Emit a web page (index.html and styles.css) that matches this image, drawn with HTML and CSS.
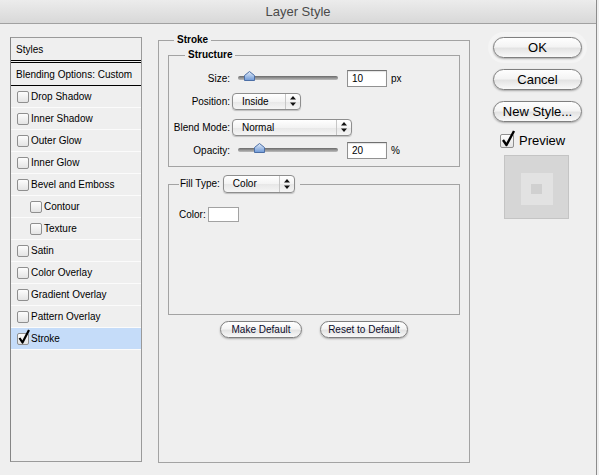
FILE: index.html
```html
<!DOCTYPE html>
<html lang="en">
<head>
    <meta charset="UTF-8">
    <title>Layer Style</title>
    <link rel="stylesheet" href="styles.css">
</head>
<body>

    <div class="window">
        <!-- Title bar -->
        <div class="titlebar">Layer Style</div>

        <div class="dialog">
            <!-- Effects list -->
            <ul class="styles-list">
                <li class="list-head">Styles</li>
                <li class="list-blend">Blending Options: Custom</li>
                <li class="effect"><span class="check"></span>Drop Shadow</li>
                <li class="effect"><span class="check"></span>Inner Shadow</li>
                <li class="effect"><span class="check"></span>Outer Glow</li>
                <li class="effect"><span class="check"></span>Inner Glow</li>
                <li class="effect"><span class="check"></span>Bevel and Emboss</li>
                <li class="effect sub"><span class="check"></span>Contour</li>
                <li class="effect sub"><span class="check"></span>Texture</li>
                <li class="effect"><span class="check"></span>Satin</li>
                <li class="effect"><span class="check"></span>Color Overlay</li>
                <li class="effect"><span class="check"></span>Gradient Overlay</li>
                <li class="effect"><span class="check"></span>Pattern Overlay</li>
                <li class="effect selected">
                    <span class="check">
                        <svg class="tick" viewBox="0 0 14 16" width="14" height="16"><path d="M2.5 9 L5.5 13.5 L12 1" fill="none" stroke="#000" stroke-width="2.2" stroke-linejoin="round"/></svg>
                    </span>Stroke
                </li>
            </ul>

            <!-- Stroke settings -->
            <fieldset class="group stroke-group">
                <legend>Stroke</legend>

                <fieldset class="group structure">
                    <legend>Structure</legend>

                    <div class="field field-size">
                        <label>Size:</label>
                        <div class="slider">
                            <svg class="thumb" style="left: 6px" viewBox="0 0 11 10" width="11" height="10">
                                <defs>
                                    <linearGradient id="thumb-a" x1="0" y1="0" x2="0" y2="1">
                                        <stop offset="0" stop-color="#e3edfa"/>
                                        <stop offset="1" stop-color="#6d98d6"/>
                                    </linearGradient>
                                </defs>
                                <path d="M5.5 0.5 L10.5 4.5 L10.5 9.5 L0.5 9.5 L0.5 4.5 Z" fill="url(#thumb-a)" stroke="#4c6fa6"/>
                            </svg>
                        </div>
                        <input class="num" type="text" value="10">
                        <span class="unit">px</span>
                    </div>

                    <div class="field field-position">
                        <label>Position:</label>
                        <div class="popup popup-position">
                            <span class="popup-label">Inside</span>
                            <span class="arrows"><svg viewBox="0 0 6 10" width="6" height="10"><path d="M3 0 L6 3.5 L0 3.5 Z M0 6.5 L6 6.5 L3 10 Z" fill="#111"/></svg></span>
                        </div>
                    </div>

                    <div class="field field-blend">
                        <label>Blend Mode:</label>
                        <div class="popup popup-blend">
                            <span class="popup-label">Normal</span>
                            <span class="arrows"><svg viewBox="0 0 6 10" width="6" height="10"><path d="M3 0 L6 3.5 L0 3.5 Z M0 6.5 L6 6.5 L3 10 Z" fill="#111"/></svg></span>
                        </div>
                    </div>

                    <div class="field field-opacity">
                        <label>Opacity:</label>
                        <div class="slider">
                            <svg class="thumb" style="left: 16px" viewBox="0 0 11 10" width="11" height="10">
                                <defs>
                                    <linearGradient id="thumb-b" x1="0" y1="0" x2="0" y2="1">
                                        <stop offset="0" stop-color="#e3edfa"/>
                                        <stop offset="1" stop-color="#6d98d6"/>
                                    </linearGradient>
                                </defs>
                                <path d="M5.5 0.5 L10.5 4.5 L10.5 9.5 L0.5 9.5 L0.5 4.5 Z" fill="url(#thumb-b)" stroke="#4c6fa6"/>
                            </svg>
                        </div>
                        <input class="num" type="text" value="20">
                        <span class="unit">%</span>
                    </div>
                </fieldset>

                <fieldset class="group fill">
                    <legend>
                        <label>Fill Type:</label>
                        <div class="popup popup-fill">
                            <span class="popup-label">Color</span>
                            <span class="arrows"><svg viewBox="0 0 6 10" width="6" height="10"><path d="M3 0 L6 3.5 L0 3.5 Z M0 6.5 L6 6.5 L3 10 Z" fill="#111"/></svg></span>
                        </div>
                    </legend>
                    <div class="color-row">
                        <label>Color:</label>
                        <span class="swatch"></span>
                    </div>
                </fieldset>

                <div class="defaults">
                    <button class="small-btn btn-make">Make Default</button>
                    <button class="small-btn btn-reset">Reset to Default</button>
                </div>
            </fieldset>

            <!-- Dialog buttons and preview -->
            <div class="actions">
                <button class="aqua default">OK</button>
                <button class="aqua">Cancel</button>
                <button class="aqua">New Style...</button>
                <div class="preview-toggle">
                    <span class="check big">
                        <svg class="tick" viewBox="0 0 16 18" width="16" height="18"><path d="M3 10 L6.5 15 L14 1" fill="none" stroke="#000" stroke-width="2.4" stroke-linejoin="round"/></svg>
                    </span>
                    <span>Preview</span>
                </div>
                <div class="preview-box">
                    <div class="preview-fill"><div class="preview-core"></div></div>
                </div>
            </div>
        </div>
    </div>

</body>
</html>
```

FILE: styles.css
```css
/* Mac-style dialog */
body {
    margin: 0;
    background-color: #efefef;
    font-family: "Liberation Sans", Arial, sans-serif;
    font-size: 10px;
    color: #000;
}
.window {
    width: 597px;
    height: 475px;
    box-sizing: border-box;
    border-right: 1px solid #8c8c8c;
    background-color: #efefef;
}
.titlebar {
    height: 23px;
    line-height: 24px;
    border-bottom: 1px solid #a1a1a1;
    border-top-right-radius: 5px;
    background: linear-gradient(#ececec, #d8d8d8);
    text-align: center;
    font-size: 13px;
    color: #4a4a4a;
}
.dialog {
    display: flex;
    align-items: flex-start;
    padding: 13px 0 0 10px;
}

/* Effects list */
.styles-list {
    list-style: none;
    margin: 0;
    padding: 0;
    width: 132px;
    height: 425px;
    box-sizing: border-box;
    border: 1px solid #9a9a9a;
    border-left-color: #858585;
}
.styles-list li {
    height: 21px;
    display: flex;
    align-items: center;
    padding-left: 6px;
    border-bottom: 1px solid #fbfbfb;
}
.styles-list .list-head {
    height: 22px;
    padding-left: 5px;
    border-bottom: 3px double #000;
}
.styles-list .list-blend {
    height: 22px;
    padding-left: 5px;
    border-bottom: 1px solid #000;
}
.styles-list .sub {
    padding-left: 19px;
}
.styles-list .selected {
    background-color: #c5dcf9;
}
.check {
    position: relative;
    flex: none;
    width: 12px;
    height: 12px;
    box-sizing: border-box;
    margin-right: 2px;
    border: 1px solid #8f8f8f;
    border-radius: 2px;
    background: linear-gradient(#fdfdfd, #e4e4e4);
}
.check .tick {
    position: absolute;
    left: -1px;
    top: -5px;
}
.check.big {
    width: 14px;
    height: 14px;
    margin-right: 5px;
}
.check.big .tick {
    left: -1px;
    top: -5px;
}

/* Group boxes */
.group {
    margin: 0;
    min-width: 0;
    border: 1px solid #a3a3a3;
}
.group > legend {
    padding: 0 3px;
    line-height: 14px;
    font-weight: bold;
}
.stroke-group {
    margin: -4px 0 0 16px;
    width: 312px;
    height: 430px;
    box-sizing: border-box;
    padding: 1px 9px 0;
}
.stroke-group > legend {
    margin-left: 6px;
}
.structure {
    padding: 0 8px 7px;
}
.structure > legend {
    margin-left: 8px;
}
.field {
    display: flex;
    align-items: center;
    height: 18px;
}
.field-size { margin-top: 7px; }
.field-position { margin-top: 5px; }
.field-blend { margin-top: 8px; }
.field-opacity { margin-top: 5px; }
.field > label {
    flex: none;
    display: flex;
    justify-content: flex-end;
    width: 53px;
    margin-right: 2px;
    white-space: nowrap;
}
.slider {
    position: relative;
    width: 100px;
    height: 4px;
    margin-left: 6px;
    border-radius: 2px;
    background: linear-gradient(#6a6a6a, #bdbdbd);
}
.slider .thumb {
    position: absolute;
    top: -5px;
}
.num {
    width: 40px;
    height: 17px;
    box-sizing: border-box;
    margin: 0 0 0 9px;
    padding: 0 0 0 4px;
    border: 1px solid #919191;
    border-top-color: #707070;
    background-color: #fff;
    box-shadow: inset 0 1px 1px rgba(0, 0, 0, 0.12);
    font: 10px "Liberation Sans", Arial, sans-serif;
}
.unit {
    margin-left: 4px;
}

/* Popup menus */
.popup {
    display: flex;
    align-items: center;
    height: 17px;
    box-sizing: border-box;
    padding-left: 9px;
    border: 1px solid #8e8e8e;
    border-radius: 4px;
    background: linear-gradient(#ffffff, #f3f3f3 50%, #e7e7e7 51%, #f5f5f5);
    box-shadow: 0 1px 1px rgba(0, 0, 0, 0.2);
    font-weight: normal;
}
.popup-label {
    flex: 1;
}
.popup .arrows {
    align-self: stretch;
    width: 14px;
    display: flex;
    align-items: center;
    justify-content: center;
    border-left: 1px solid #c6c6c6;
}
.popup-position { width: 69px; }
.popup-blend { width: 120px; }
.popup-fill {
    width: 72px;
    height: 18px;
    margin-left: 3px;
}

/* Fill box */
.fill {
    height: 140px;
    box-sizing: border-box;
    margin-top: 8px;
    padding: 0 10px;
}
.fill > legend {
    display: flex;
    align-items: center;
    padding: 0 5px 0 1px;
    font-weight: normal;
}
.color-row {
    display: flex;
    align-items: center;
    margin-top: 14px;
}
.color-row label {
    width: 29px;
}
.swatch {
    width: 31px;
    height: 15px;
    box-sizing: border-box;
    border: 1px solid #a2a2a2;
    background-color: #fff;
}

/* Buttons */
.defaults {
    display: flex;
    justify-content: center;
    gap: 18px;
    margin-top: 6px;
}
.small-btn,
.aqua {
    padding: 0;
    border: 1px solid #7f7f7f;
    background: linear-gradient(#fefefe, #f4f4f4 45%, #e3e3e3 55%, #f9f9f9);
    box-shadow: 0 1px 2px rgba(0, 0, 0, 0.3);
    color: #000;
    font-family: "Liberation Sans", Arial, sans-serif;
}
.small-btn {
    height: 17px;
    border-radius: 9px;
    font-size: 10px;
    color: #0b0b2a;
}
.btn-make { width: 82px; }
.btn-reset { width: 88px; }

.actions {
    display: flex;
    flex-direction: column;
    width: 89px;
    margin-left: 23px;
}
.aqua {
    width: 89px;
    height: 21px;
    margin-bottom: 11px;
    border-radius: 11px;
    font-size: 13px;
}
.aqua.default {
    box-shadow: 0 1px 2px rgba(0, 0, 0, 0.3), 0 0 0 5px rgba(255, 255, 255, 0.3);
}
.preview-toggle {
    display: flex;
    align-items: center;
    height: 15px;
    padding-left: 7px;
    font-size: 13px;
}
.preview-box {
    display: flex;
    align-items: center;
    justify-content: center;
    width: 65px;
    height: 64px;
    box-sizing: border-box;
    margin: 7px 0 0 11px;
    border: 1px solid #c4c4c4;
    background-color: #d6d6d6;
}
.preview-fill {
    display: flex;
    align-items: center;
    justify-content: center;
    width: 32px;
    height: 32px;
    margin-top: 4px;
    background-color: #e2e2e2;
}
.preview-core {
    width: 11px;
    height: 10px;
    background-color: #d0d0d0;
}
```
